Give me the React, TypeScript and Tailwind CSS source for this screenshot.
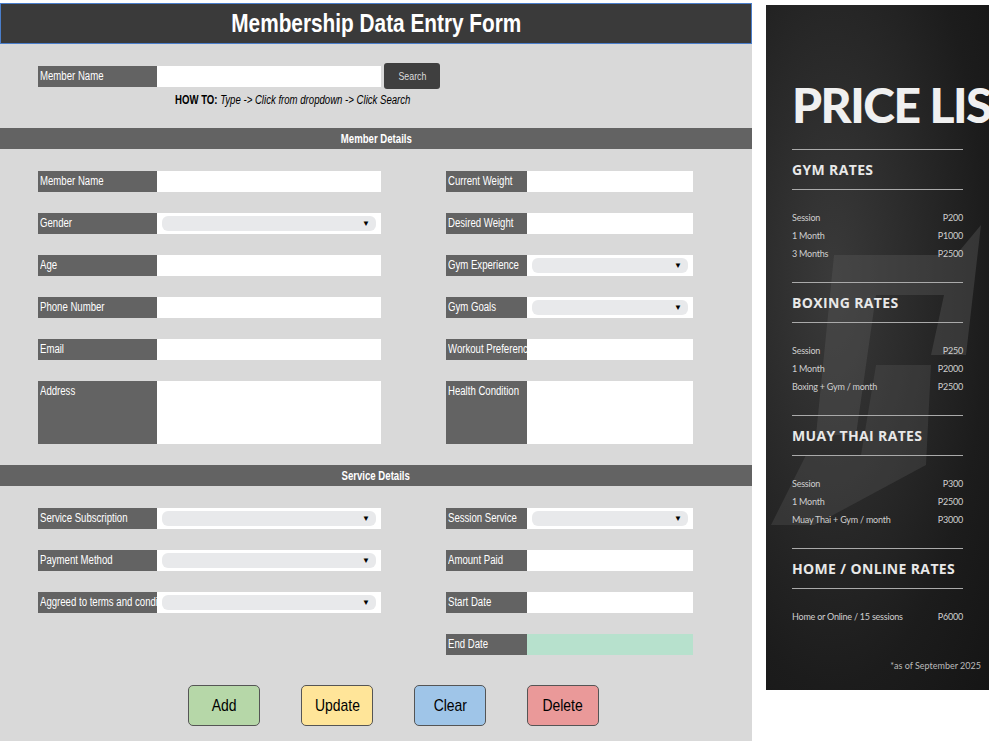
import React from "react";

const F = { fontFamily: '"Liberation Sans", Arial, sans-serif' };

function N({ children }: { children: React.ReactNode }) {
  return <span className="inline-block whitespace-nowrap origin-left scale-x-[0.8]">{children}</span>;
}

function Label({ t, w, h = "h-[21px]" }: { t: string; w: string; h?: string }) {
  return (
    <div className={`${w} ${h} bg-[#636363] text-white text-[12px] pl-[2px] pt-[3px] leading-[15px] overflow-hidden`}><N>{t}</N></div>
  );
}

function Input({ w, kind = "text", h = "h-[21px]" }: { w: string; kind?: "text" | "select" | "green"; h?: string }) {
  if (kind === "select")
    return (
      <div className={`${w} ${h} bg-white flex items-center px-[5px]`}>
        <div className="flex-1 h-[15px] rounded-[6px] bg-[#e8e9eb] flex items-center justify-end pr-[6px] text-[8px] text-black">▼</div>
      </div>
    );
  return <div className={`${w} ${h} ${kind === "green" ? "bg-[#b7e1cd]" : "bg-white"}`} />;
}

function Row({ l, k }: { l: string; k?: "text" | "select" | "green" }) {
  return (
    <div className="flex">
      <Label t={l} w="w-[119px]" />
      <Input w="w-[224px]" kind={k} />
    </div>
  );
}
function RowR({ l, k }: { l: string; k?: "text" | "select" | "green" }) {
  return (
    <div className="flex">
      <Label t={l} w="w-[81px]" />
      <Input w="w-[166px]" kind={k} />
    </div>
  );
}

function Section({ t }: { t: string }) {
  return <div className="h-[21px] bg-[#636363] text-white text-[12px] font-bold flex items-center justify-center"><span className="inline-block scale-x-[0.8]">{t}</span></div>;
}

function Btn({ t, c }: { t: string; c: string }) {
  return <div className={`w-[72px] h-[41px] ${c} border border-[#555] rounded-[5px] flex items-center justify-center text-[17px] text-black`}><span className="inline-block scale-x-[0.82]">{t}</span></div>;
}

const Rates = ({ items }: { items: [string, string][] }) => (
  <div className="flex flex-col py-[19px] text-[9px] text-[#cfcfcf] tracking-tight">
    {items.map(([a, b]) => (
      <div key={a} className="flex justify-between leading-[18px]"><span>{a}</span><span>{b}</span></div>
    ))}
  </div>
);
const Head = ({ t }: { t: string }) => (
  <div className="border-y border-[#aaa] py-[10px] text-[14px] font-bold text-[#e8e8e8] tracking-wide leading-[19px]" style={{ fontFamily: '"Open Sans", sans-serif' }}>{t}</div>
);

export default function App() {
  return (
    <div className="w-[1000px] h-[750px] bg-white flex" style={F}>
      <div className="w-[752px] mt-[3px] h-[738px] bg-[#d9d9d9] flex flex-col">
        <div className="h-[41px] bg-[#3a3a3a] border border-[#4a7ecb] text-white text-[26px] font-bold flex items-center justify-center"><span className="inline-block scale-x-[0.8]">Membership Data Entry Form</span></div>
        <div className="pl-[38px] pt-[19px] h-[84px]">
          <div className="flex items-center">
            <Label t="Member Name" w="w-[119px]" />
            <Input w="w-[224px]" />
            <div className="ml-[3px] w-[56px] h-[26px] bg-[#3f3f3f] rounded-[3px] text-[#ddd] text-[11px] flex items-center justify-center"><span className="inline-block scale-x-[0.8]">Search</span></div>
          </div>
          <div className="pl-[137px] pt-[2px] text-[12px] text-black"><N><b>HOW TO:</b> <i>Type -&gt; Click from dropdown -&gt; Click Search</i></N></div>
        </div>
        <Section t="Member Details" />
        <div className="flex pl-[38px] pt-[22px] h-[316px] gap-[65px]">
          <div className="flex flex-col gap-[21px]">
            <Row l="Member Name" />
            <Row l="Gender" k="select" />
            <Row l="Age" />
            <Row l="Phone Number" />
            <Row l="Email" />
            <div className="flex">
              <Label t="Address" w="w-[119px]" h="h-[63px]" />
              <Input w="w-[224px]" h="h-[63px]" />
            </div>
          </div>
          <div className="flex flex-col gap-[21px]">
            <RowR l="Current Weight" />
            <RowR l="Desired Weight" />
            <RowR l="Gym Experience" k="select" />
            <RowR l="Gym Goals" k="select" />
            <RowR l="Workout Preferences" />
            <div className="flex">
              <Label t="Health Condition" w="w-[81px]" h="h-[63px]" />
              <Input w="w-[166px]" h="h-[63px]" />
            </div>
          </div>
        </div>
        <Section t="Service Details" />
        <div className="flex pl-[38px] pt-[22px] gap-[65px]">
          <div className="flex flex-col gap-[21px]">
            <Row l="Service Subscription" k="select" />
            <Row l="Payment Method" k="select" />
            <Row l="Aggreed to terms and conditions" k="select" />
          </div>
          <div className="flex flex-col gap-[21px]">
            <RowR l="Session Service" k="select" />
            <RowR l="Amount Paid" />
            <RowR l="Start Date" />
            <RowR l="End Date" k="green" />
          </div>
        </div>
        <div className="flex pl-[188px] pt-[30px] gap-[41px]">
          <Btn t="Add" c="bg-[#b6d7a8]" />
          <Btn t="Update" c="bg-[#ffe599]" />
          <Btn t="Clear" c="bg-[#9fc5e8]" />
          <Btn t="Delete" c="bg-[#ea9999]" />
        </div>
      </div>
      <div className="ml-[14px] mt-[5px] w-[223px] h-[685px] relative overflow-hidden bg-[radial-gradient(ellipse_at_30%_40%,#3a3a3a,#1c1c1c_70%,#151515)]" style={{ fontFamily: '"Lato", sans-serif' }}>
        <svg className="absolute left-0 top-[200px]" width="223" height="320" viewBox="0 0 223 320">
          <path d="M68 50 L190 50 L215 20 L200 150 L165 150 L178 90 L110 90 L90 230 L50 230 Z" fill="#555" opacity="0.45" />
          <path d="M110 160 L165 160 L160 260 L30 330 L0 330 L40 250 L95 250 Z" fill="#555" opacity="0.35" />
        </svg>
        <div className="relative px-[26px] pt-[72px]">
          <div className="text-[48px] text-[#f0f0f0] leading-[56px] whitespace-nowrap mb-[16px]" style={{ fontWeight: 900, letterSpacing: "-1.5px" }}>PRICE LIST</div>
          <Head t="GYM RATES" />
          <Rates items={[["Session", "P200"], ["1 Month", "P1000"], ["3 Months", "P2500"]]} />
          <Head t="BOXING RATES" />
          <Rates items={[["Session", "P250"], ["1 Month", "P2000"], ["Boxing + Gym / month", "P2500"]]} />
          <Head t="MUAY THAI RATES" />
          <Rates items={[["Session", "P300"], ["1 Month", "P2500"], ["Muay Thai + Gym / month", "P3000"]]} />
          <Head t="HOME / ONLINE RATES" />
          <Rates items={[["Home or Online / 15 sessions", "P6000"]]} />
        </div>
        <div className="absolute right-[8px] bottom-[18px] text-[9px] text-[#bbb]">*as of September 2025</div>
      </div>
    </div>
  );
}
